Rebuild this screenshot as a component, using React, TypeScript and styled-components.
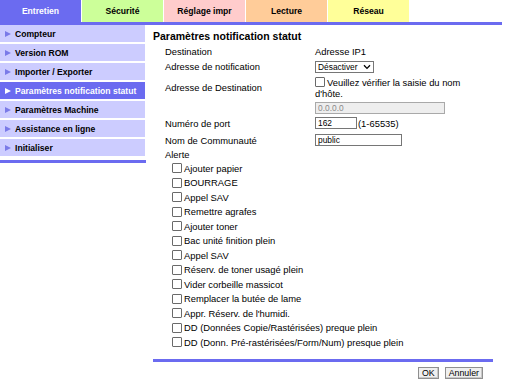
import React from "react";
import styled, { createGlobalStyle } from "styled-components";

const GlobalStyle = createGlobalStyle`
  body {
    margin: 0;
    background: #ffffff;
    font-family: "Liberation Sans", Arial, sans-serif;
    color: #000000;
  }
`;

const BLUE = "#6b6bf0";
const LAVENDER = "#ccccff";

const Page = styled.div`
  width: 517px;
  height: 379px;
  overflow: hidden;
`;

const TabBar = styled.div`
  display: flex;
  gap: 1px;
  height: 22px;
`;

const Tab = styled.div<{ $bg: string; $active?: boolean }>`
  width: 81px;
  display: flex;
  align-items: center;
  justify-content: center;
  background: ${(p) => p.$bg};
  color: ${(p) => (p.$active ? "#ffffff" : "#000000")};
  font-size: 8.6px;
  font-weight: bold;
`;

const TopRule = styled.div`
  width: 502px;
  height: 3px;
  background: ${BLUE};
`;

const Body = styled.div`
  display: flex;
  gap: 7px;
`;

const Sidebar = styled.nav`
  width: 146px;
  display: flex;
  flex-direction: column;
`;

const NavItem = styled.div<{ $active?: boolean }>`
  height: 17px;
  margin-bottom: 2px;
  width: 145px;
  display: flex;
  align-items: center;
  gap: 4px;
  padding-left: 5px;
  box-sizing: border-box;
  background: ${(p) => (p.$active ? BLUE : LAVENDER)};
  color: ${(p) => (p.$active ? "#ffffff" : "#000000")};
  font-size: 8.6px;
  font-weight: bold;
  white-space: nowrap;
`;

const Arrow = styled.span<{ $active?: boolean }>`
  width: 0;
  height: 0;
  border-top: 3.5px solid transparent;
  border-bottom: 3.5px solid transparent;
  border-left: 6px solid ${(p) => (p.$active ? "#ffffff" : "#7a7ae8")};
`;

const SideRule = styled.div`
  margin-top: 2px;
  height: 3px;
  width: 146px;
  background: ${BLUE};
`;

const Main = styled.main`
  width: 340px;
  display: flex;
  flex-direction: column;
`;

const Title = styled.h1`
  margin: 4px 0 1px;
  font-size: 10.5px;
  line-height: 14px;
  font-weight: bold;
`;

const Form = styled.div`
  display: grid;
  grid-template-columns: 162px 1fr;
  font-size: 9.4px;
`;

const Label = styled.div<{ $h: number }>`
  height: ${(p) => p.$h}px;
  padding-left: 12px;
  display: flex;
  align-items: center;
`;

const Value = styled.div<{ $h: number }>`
  height: ${(p) => p.$h}px;
  display: flex;
  align-items: center;
  gap: 1px;
`;

const SelectWrap = styled.div`
  position: relative;
  display: flex;
`;

const Select = styled.select`
  appearance: none;
  width: 59px;
  height: 12px;
  padding: 0 0 0 2px;
  border: 1px solid #767676;
  border-radius: 0;
  background: #ffffff;
  font-family: inherit;
  font-size: 8.4px;
  line-height: 10px;
  color: #000;
`;

const Chevron = styled.svg`
  position: absolute;
  right: 3px;
  top: 3px;
  pointer-events: none;
`;

const Check = styled.input.attrs({ type: "checkbox" })`
  appearance: none;
  width: 10px;
  height: 10px;
  margin: 0 2px 0 0;
  border: 1px solid #6a6a6a;
  border-radius: 1px;
  background: #ffffff;
  box-sizing: border-box;
  flex: none;
`;

const HostCheck = styled.div`
  padding: 3px 0 2px;
  width: 150px;
  line-height: 11px;
  font-size: 9.4px;
  align-self: stretch;
  box-sizing: border-box;
  ${Check} {
    vertical-align: -1px;
  }
`;

const TextBox = styled.input<{ $w: number; $disabled?: boolean }>`
  width: ${(p) => p.$w}px;
  height: 12px;
  box-sizing: border-box;
  border: 1px solid #767676;
  padding: 0 2px;
  font-family: inherit;
  font-size: 8.4px;
  background: ${(p) => (p.$disabled ? "#eeeeee" : "#ffffff")};
  color: ${(p) => (p.$disabled ? "#8a8a8a" : "#000000")};
  border-color: ${(p) => (p.$disabled ? "#a9a9a9" : "#767676")};
`;

const AlertList = styled.div`
  display: flex;
  flex-direction: column;
  padding-left: 19px;
  font-size: 9.4px;
`;

const AlertItem = styled.label`
  height: 14.5px;
  display: flex;
  align-items: center;
  white-space: nowrap;
`;

const BottomRule = styled.div`
  margin-top: 9.5px;
  height: 3px;
  background: ${BLUE};
`;

const Actions = styled.div`
  margin-top: 5px;
  padding-right: 10px;
  display: flex;
  justify-content: flex-end;
  gap: 6px;
`;

const Button = styled.button`
  height: 12px;
  padding: 0 3px;
  border: 1px solid #8f8f8f;
  border-radius: 0;
  background: #efefef;
  box-shadow: inset -1px -1px 0 #c8c8c8;
  font-family: inherit;
  font-size: 8.8px;
  line-height: 10px;
  color: #000;
`;

const tabs = [
  { label: "Entretien", bg: BLUE, active: true },
  { label: "Sécurité", bg: "#ccff99" },
  { label: "Réglage impr", bg: "#ffcccc" },
  { label: "Lecture", bg: "#ffcc99" },
  { label: "Réseau", bg: "#ffff99" },
];

const menu = [
  "Compteur",
  "Version ROM",
  "Importer / Exporter",
  "Paramètres notification statut",
  "Paramètres Machine",
  "Assistance en ligne",
  "Initialiser",
];

const alerts = [
  "Ajouter papier",
  "BOURRAGE",
  "Appel SAV",
  "Remettre agrafes",
  "Ajouter toner",
  "Bac unité finition plein",
  "Appel SAV",
  "Réserv. de toner usagé plein",
  "Vider corbeille massicot",
  "Remplacer la butée de lame",
  "Appr. Réserv. de l'humidi.",
  "DD (Données Copie/Rastérisées) preque plein",
  "DD (Donn. Pré-rastérisées/Form/Num) presque plein",
];

export default function App() {
  return (
    <Page>
      <GlobalStyle />
      <TabBar>
        {tabs.map((t) => (
          <Tab key={t.label} $bg={t.bg} $active={t.active}>
            {t.label}
          </Tab>
        ))}
      </TabBar>
      <TopRule />
      <Body>
        <Sidebar>
          {menu.map((m) => {
            const active = m === "Paramètres notification statut";
            return (
              <NavItem key={m} $active={active}>
                <Arrow $active={active} />
                {m}
              </NavItem>
            );
          })}
          <SideRule />
        </Sidebar>
        <Main>
          <Title>Paramètres notification statut</Title>
          <Form>
            <Label $h={15}>Destination</Label>
            <Value $h={15}>Adresse IP1</Value>

            <Label $h={15}>Adresse de notification</Label>
            <Value $h={15}>
              <SelectWrap>
                <Select defaultValue="off">
                  <option value="off">Désactiver</option>
                  <option value="on">Activer</option>
                </Select>
                <Chevron width="8" height="6" viewBox="0 0 8 6">
                  <path d="M1 1.2 L4 4.4 L7 1.2" fill="none" stroke="#000" strokeWidth="1.3" />
                </Chevron>
              </SelectWrap>
            </Value>

            <Label $h={27}>Adresse de Destination</Label>
            <Value $h={27}>
              <HostCheck>
                <Check />
                Veuillez vérifier la saisie du nom d'hôte.
              </HostCheck>
            </Value>

            <Label $h={13} />
            <Value $h={13}>
              <TextBox $w={130} $disabled disabled defaultValue="0.0.0.0" />
            </Value>

            <Label $h={18}>Numéro de port</Label>
            <Value $h={18}>
              <TextBox $w={42} defaultValue="162" />
              (1-65535)
            </Value>

            <Label $h={16}>Nom de Communauté</Label>
            <Value $h={16}>
              <TextBox $w={87} defaultValue="public" />
            </Value>

            <Label $h={13}>Alerte</Label>
            <Value $h={13} />
          </Form>
          <AlertList>
            {alerts.map((a, i) => (
              <AlertItem key={i}>
                <Check />
                {a}
              </AlertItem>
            ))}
          </AlertList>
          <BottomRule />
          <Actions>
            <Button>OK</Button>
            <Button>Annuler</Button>
          </Actions>
        </Main>
      </Body>
    </Page>
  );
}
